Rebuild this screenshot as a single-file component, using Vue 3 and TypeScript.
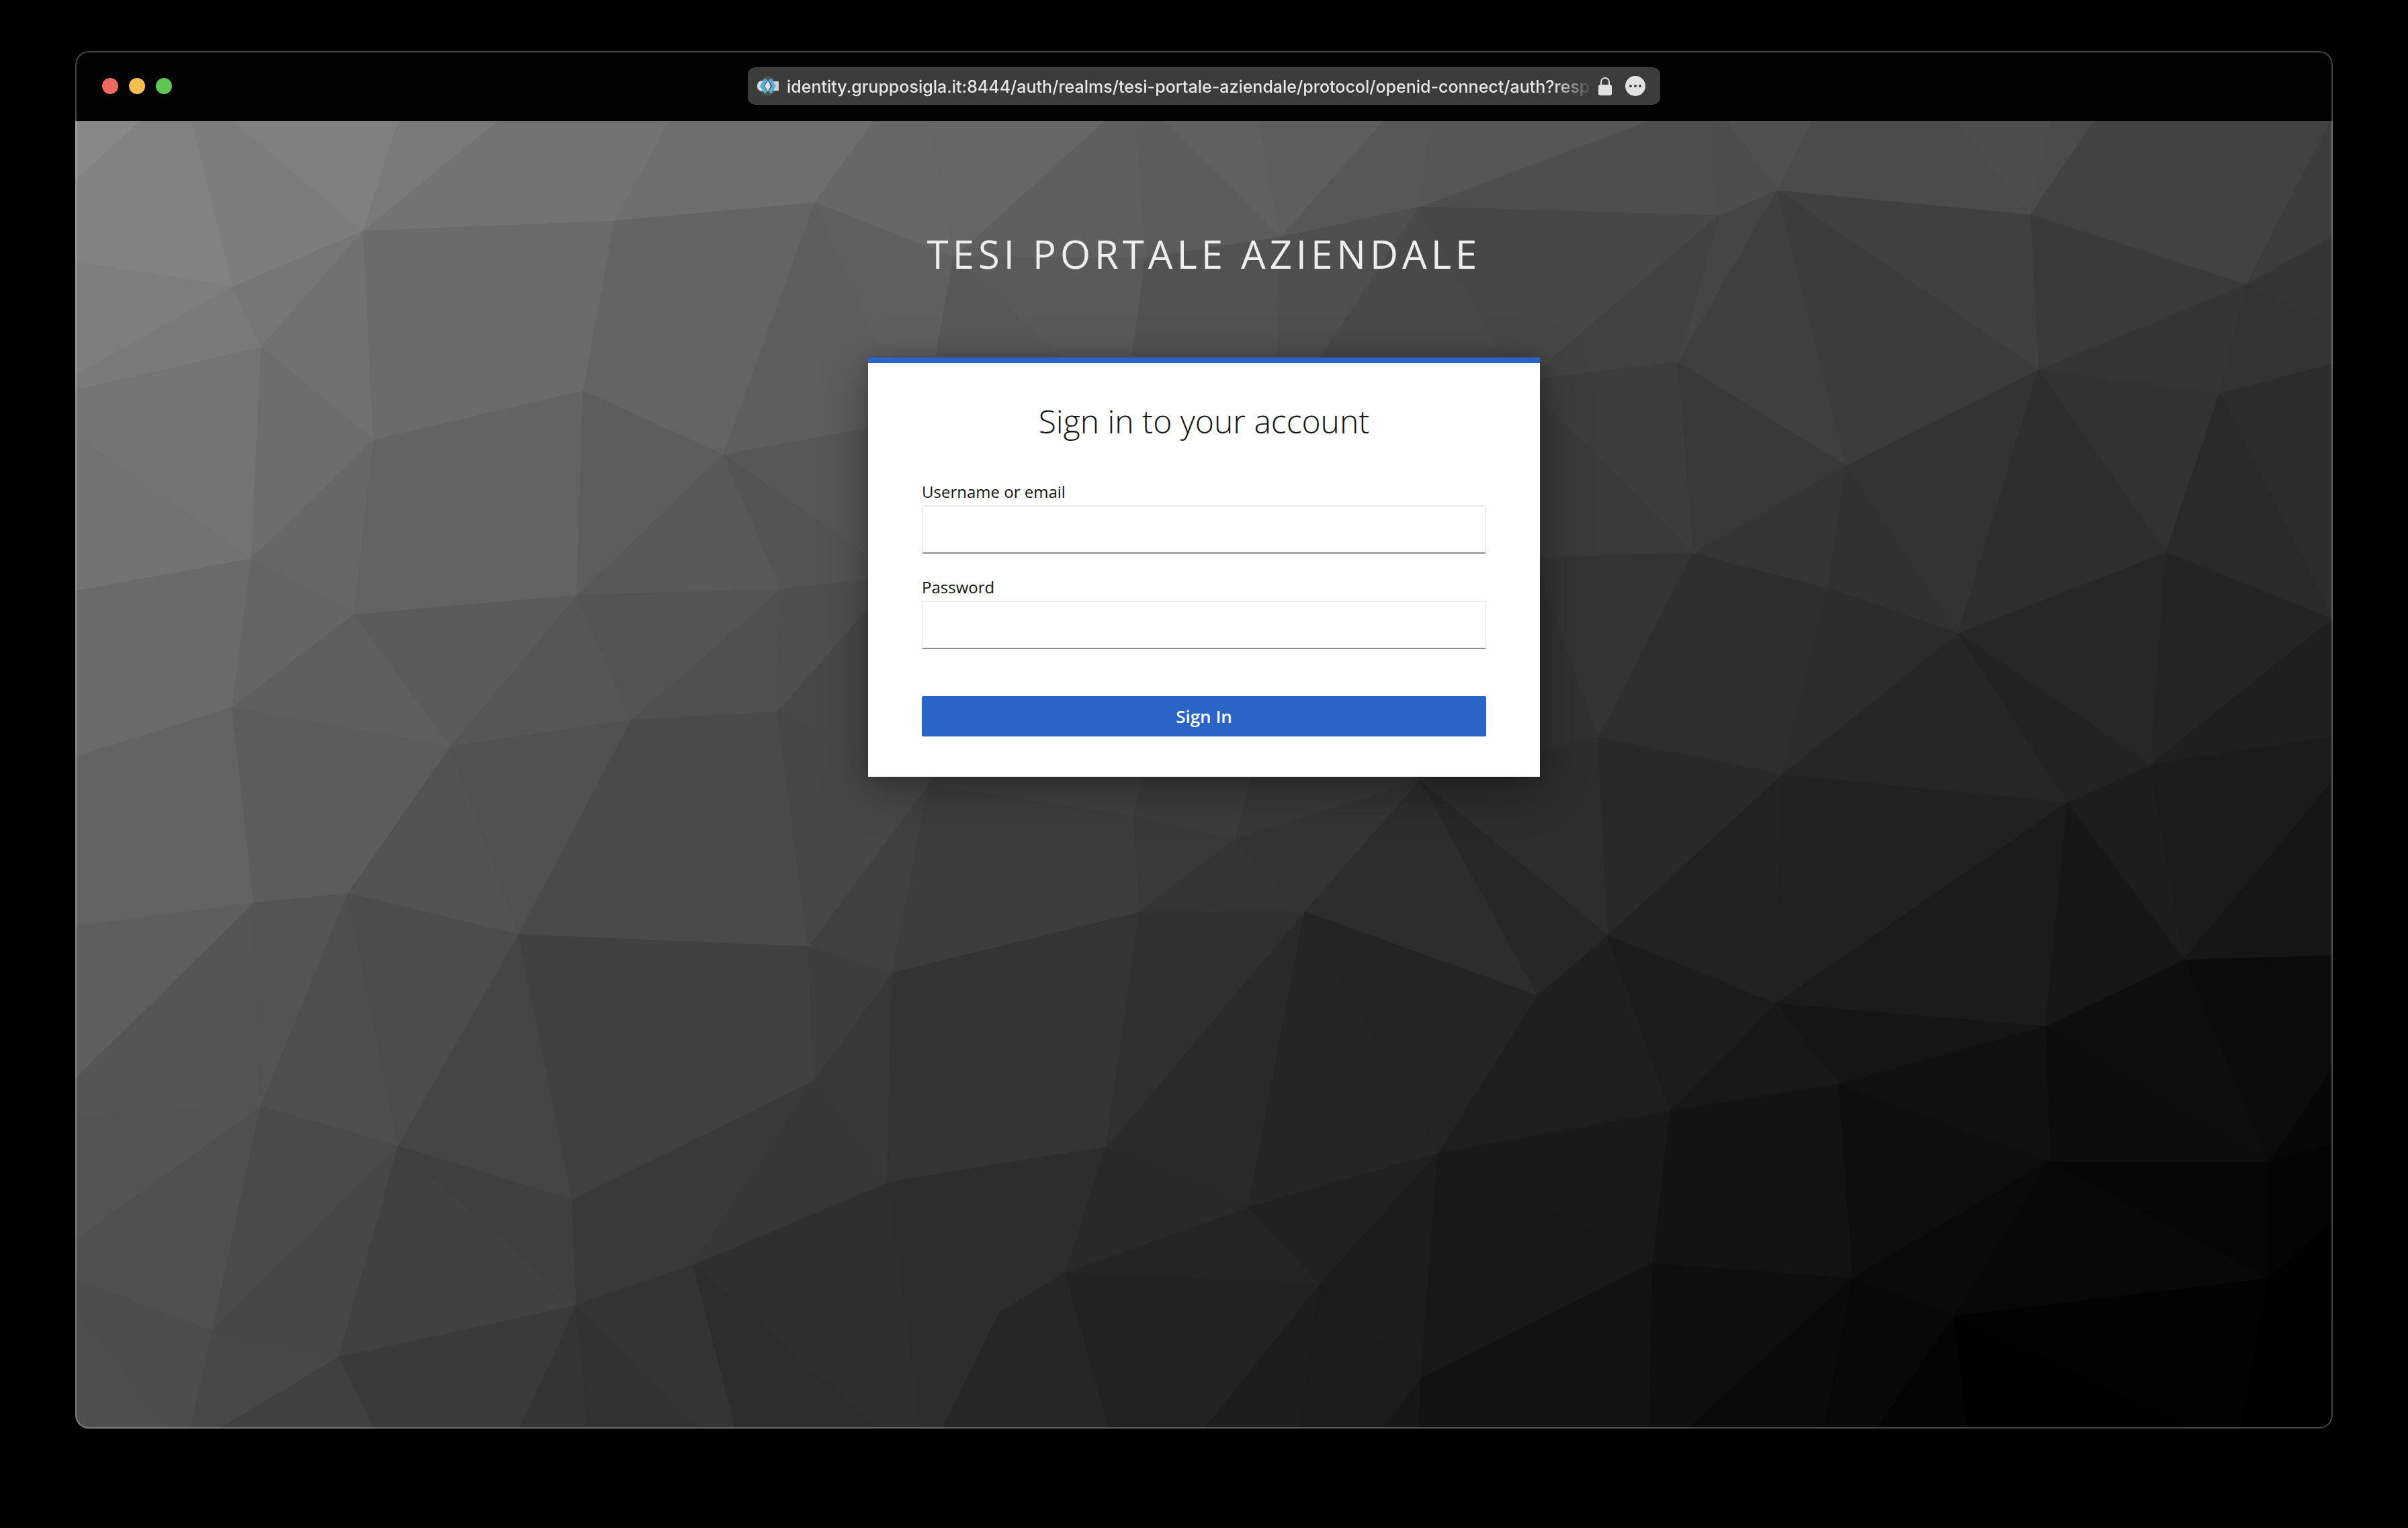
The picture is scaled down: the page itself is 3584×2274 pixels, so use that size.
<script setup lang="ts">
import { ref } from 'vue'

type Point = [number, number]

// Corner points of the faceted backdrop, by name.
const points: Record<string, Point> = {
  // top edge
  TL: [0, 0], a1: [97, 0], a2: [174, 0], a3: [233, 0], a4: [481, 0], a5: [630, 0], a6: [885, 0],
  d1: [1188, 0], d2: [1271, 0], d3: [1532, 0], d4: [1578, 0], d5: [1620, 0], d6: [1761, 0], d7: [1946, 0], d8: [2018, 0],
  e1: [2341, 0], e2: [2435, 0], e3: [2457, 0], e4: [2585, 0], e5: [2794, 0], e6: [2941, 0], e7: [3004, 0], e8: [3357, 0], TR: [3360, 0],
  // left edge
  L1: [0, 90], L2: [0, 210], L3: [0, 379], L4: [0, 401], L5: [0, 469], L6: [0, 700], L7: [0, 947], L8: [0, 1199],
  L9: [0, 1426], L10: [0, 1483], L11: [0, 1665], L12: [0, 1724], L13: [0, 1768], BL: [0, 1946],
  // right edge
  r1: [3360, 171], r2: [3360, 306], r3: [3360, 361], r4: [3360, 741], r5: [3360, 916], r6: [3360, 983], r7: [3360, 1241],
  r8: [3360, 1410], r9: [3360, 1523], r10: [3360, 1634], r11: [3360, 1790], BR: [3360, 1946],
  // bottom edge
  B1: [142, 1946], B2: [172, 1946], B3: [216, 1946], B4: [445, 1946], B5: [662, 1946], B6: [763, 1946], B7: [925, 1946], B8: [983, 1946],
  C1: [1194, 1946], C2: [1260, 1946], C3: [1291, 1946], C4: [1539, 1946], C5: [1681, 1946], C6: [1824, 1946], C7: [1946, 1946], C8: [2000, 1946],
  f1: [2343, 1946], f2: [2401, 1946], f3: [2604, 1946], f4: [2682, 1946], f5: [2816, 1946], f6: [3150, 1946], f7: [3225, 1946],
  // left part
  P1: [429, 164], P2: [235, 247], P3: [277, 337], P4: [444, 475], P5: [803, 149], P6: [756, 402], P7: [965, 497], P8: [1101, 122],
  P9: [262, 652], P10: [415, 735], P11: [747, 706], P12: [1051, 697], P13: [234, 873], P14: [559, 931], P15: [828, 892], P16: [1045, 880],
  P17: [266, 1164], P18: [406, 1150], P19: [660, 1211], P20: [1091, 1229], P21: [276, 1467], P22: [481, 1526], P23: [740, 1606],
  P24: [1099, 1429], P25: [204, 1801], P26: [392, 1840], P27: [746, 1763], P28: [920, 1702],
  // middle
  Q1: [1270, 988], Q2: [1576, 1034], Q3: [1584, 1178], Q4: [1216, 1268], Q6: [1726, 1069], Q7: [1830, 1177], Q8: [2002, 981],
  Q9: [2177, 1302], Q10: [2029, 1536], Q11: [1535, 1527], Q12: [1746, 1617], Q13: [1209, 1580], Q14: [1474, 1714], Q15: [1375, 1774],
  Q16: [1853, 1731], Q17: [2003, 1872],
  R2: [1308, 203], R3: [1593, 204], R4: [1794, 173], R5: [2001, 128],
  // points behind the sign-in card
  k1: [1224, 402], k2: [1200, 454], k3: [1200, 662], k4: [1200, 680], k5: [1200, 703], k6: [1291, 960],
  k7: [1271, 402], k8: [1520, 402], k9: [1566, 402], k10: [1787, 402], k11: [1820, 402], k12: [2155, 402],
  k13: [2160, 386], k14: [2160, 395], k15: [2160, 709], k16: [2170, 650], k17: [2140, 946],
  k18: [1593, 960], k19: [1756, 960], k20: [2001, 900],
  // right part
  S1: [2446, 141], S2: [2533, 103], S3: [2910, 139], S4: [3232, 243], S5: [2385, 359], S6: [2635, 513], S7: [2922, 370], S8: [3192, 405],
  S9: [2408, 643], S10: [2608, 695], S11: [2803, 762], S12: [3112, 642], S13: [2266, 917], S14: [2541, 972], S15: [3089, 958],
  U1: [2966, 1014], U2: [3139, 1248], U3: [2281, 1212], U4: [2532, 1313], U5: [2933, 1347], U6: [2625, 1433], U7: [2374, 1473],
  U8: [2939, 1548], U9: [3265, 1548], U10: [2348, 1700], U11: [2646, 1722], U12: [2797, 1778], U13: [3265, 1722],
}

// Each facet: its corners and its grey level (0 to 255).
const facets: [string, number][] = [
  ['TL a1 L1', 136], ['a1 a2 P2 L2 L1', 130], ['a2 a3 P1 P2', 125], ['a3 a4 P1', 128], ['a4 a5 P1', 122], ['a5 a6 P5 P1', 115],
  ['a6 d1 P8 P5', 110], ['L2 P2 L3', 126], ['L3 P2 P3 L4', 122], ['P2 P1 P3', 118], ['P1 P4 P3', 113], ['P1 P5 P6 P4', 107],
  ['P5 P8 P7 P6', 100], ['L4 P3 P9 L5', 116], ['L5 P9 L6', 115], ['P3 P4 P9', 109], ['P4 P10 P9', 103], ['P4 P6 P11 P10', 99],
  ['P6 P7 P11', 93], ['P7 P12 P11', 89], ['L6 P9 P13 L7', 106], ['P9 P10 P13', 101], ['P10 P14 P13', 95], ['P10 P11 P14', 91],
  ['P11 P15 P14', 86], ['P11 P12 P15', 84], ['P12 P16 P15', 80], ['L7 P13 P17 L8', 99], ['P13 P14 P18 P17', 92], ['P14 P19 P18', 83],
  ['P14 P15 P19', 81], ['P15 P16 P20 P19', 74], ['L8 P17 L9', 94], ['L9 P17 P21 L10', 85], ['P17 P18 P21', 84], ['P18 P22 P21', 78],
  ['P18 P19 P22', 76], ['P19 P23 P22', 69], ['P19 P24 P23', 64], ['P19 P20 P24', 65], ['L10 P21 L11', 84], ['L11 P21 P25 L12', 80],
  ['P21 P22 P25', 74], ['P22 P26 P25', 71], ['P22 P27 P26', 65], ['P22 P23 P27', 63], ['P23 P24 P28 P27', 57],
  ['L12 P25 B2 B1 L13', 77], ['L13 B1 BL', 78], ['P25 P26 B3 B2', 72], ['P26 B4 B3', 64], ['P26 P27 B5 B4', 58], ['P27 B6 B5', 52],
  ['P27 B7 B6', 50], ['P27 P28 B8 B7', 52], ['P28 C1 B8', 45], ['P28 Q13 C2 C1', 47], ['P24 Q13 P28', 55], ['P24 Q4 Q13', 56],
  ['P20 Q4 P24', 61], ['P20 Q1 Q4', 64], ['P16 Q1 P20', 71], ['Q1 Q2 Q3 Q4', 61], ['Q4 Q3 Q11 Q13', 52],
  ['Q13 Q11 Q14 Q15 C3 C2', 45], ['Q15 Q14 C4 C3', 38], ['Q14 Q16 C5 C4', 34], ['Q14 Q12 Q16', 36], ['Q14 Q11 Q12', 41],
  ['Q11 Q7 Q12', 42], ['Q3 Q7 Q11', 48], ['Q2 Q6 Q3', 57], ['Q3 Q6 Q7', 53], ['Q6 Q8 Q7', 52], ['Q7 Q8 Q9', 45], ['Q8 U3 Q9', 39],
  ['Q7 Q9 Q10', 36], ['Q7 Q10 Q12', 37], ['Q12 Q10 Q16', 32], ['Q16 C6 C5', 28], ['Q16 Q17 C7 C6', 27], ['Q16 Q10 Q17', 28],
  ['Q17 C8 C7', 23], ['Q10 U10 Q17', 24], ['Q10 U7 U10', 25], ['Q9 U7 Q10', 30], ['Q9 U3 U7', 31], ['Q17 U10 f1 C8', 18],
  ['U10 U11 f2 f1', 14], ['U11 f3 f2', 10], ['U11 U12 f4 f3', 8], ['U12 f5 f4', 4], ['U12 f6 f5', 1], ['U12 U13 f7 f6', 2],
  ['U13 r11 BR f7', 0], ['U13 r10 r11', 1], ['U7 U6 U11 U10', 19], ['U6 U8 U11', 14], ['U8 U12 U11', 10], ['U8 U13 U12', 8],
  ['U8 U9 U13', 6], ['U9 r9 r10 U13', 4], ['U9 r8 r9', 7], ['U2 r7 r8 U9', 12], ['U5 U2 U9', 14], ['U5 U9 U8', 13],
  ['U5 U8 U6', 17], ['U4 U5 U6', 21], ['U4 U6 U7', 24], ['U3 U4 U7', 28], ['S14 U4 U3', 34], ['S14 U1 U4', 33], ['U1 U5 U4', 27],
  ['U1 U2 U5', 23], ['U1 S15 U2', 29], ['S15 r5 r6 U2', 27], ['U2 r6 r7', 22], ['S13 S14 U3', 41], ['Q8 S13 U3', 45],
  ['S11 U1 S14', 38], ['S11 S15 U1', 35], ['S11 S12 S15', 39], ['S12 r4 S15', 36], ['S15 r4 r5', 31], ['S10 S11 S14', 44],
  ['S9 S10 S14 S13', 46], ['S6 S11 S10', 49], ['S6 S10 S9', 53], ['S6 S7 S11', 51], ['S7 S12 S11', 46], ['S7 S8 S12', 50],
  ['S8 r4 S12', 42], ['S8 r3 r4', 44], ['S4 r2 r3 S8', 51], ['S4 r1 r2', 53], ['S4 S8 S7', 53], ['S3 S4 S7', 58], ['S3 e7 e8 S4', 66],
  ['e8 TR r1 S4', 60], ['S2 S3 S7', 64], ['S2 S7 S6', 60], ['S2 S6 S5', 63], ['S1 S2 S5', 69], ['S5 S6 S9', 57], ['S2 e4 e5 S3', 75],
  ['S3 e5 e6', 77], ['S3 e6 e7', 75], ['S2 e3 e4', 80], ['S1 e2 e3 S2', 77], ['R5 e1 e2 S1', 78], ['R5 d8 e1', 86], ['R4 d7 d8 R5', 87],
  ['R4 d6 d7', 94], ['R4 d5 d6', 97], ['R3 d4 d5 R4', 92], ['R2 d3 d4 R3', 95], ['R2 d2 d3', 102], ['P8 d1 d2 R2', 103],
  // facets that run under the card
  ['P8 k1 k2 P7', 94], ['P8 R2 k7 k1', 96], ['R2 k8 k7', 88], ['R2 R3 k9 k8', 90], ['R3 R4 k10 k9', 82], ['R4 R5 k11 k10', 79],
  ['R5 k12 k11', 73], ['R5 S1 k13 k12', 71], ['S1 S5 k13', 66], ['S5 S9 k14 k13', 61], ['S9 k15 k14', 58], ['S9 S13 k16', 52],
  ['S13 k17 k16', 49], ['P7 k2 k3', 87], ['P7 P12 k4 k3', 84], ['P12 k4 k5 P16', 79], ['P16 k5 k6 Q1', 72], ['Q1 k6 k18 Q2', 64],
  ['Q2 k18 k19 Q6', 60], ['Q6 k19 k20 Q8', 56], ['Q8 k20 k17 S13', 49],
]

const shapes = facets.map(([corners, level]) => ({
  path: corners.split(' ').map((name) => points[name].join(',')).join(' '),
  colour: `rgb(${level}, ${level}, ${level})`,
}))

const url = 'identity.grupposigla.it:8444/auth/realms/tesi-portale-aziendale/protocol/openid-connect/auth?resp'
const username = ref('')
const password = ref('')
</script>

<template>
  <div class="desktop">
    <div class="window">
      <header class="titlebar">
        <div class="lights">
          <button class="light close" type="button" aria-label="Close"></button>
          <button class="light minimise" type="button" aria-label="Minimise"></button>
          <button class="light zoom" type="button" aria-label="Zoom"></button>
        </div>
        <div class="address">
          <svg class="favicon" viewBox="0 0 34 32" aria-hidden="true">
            <ellipse cx="18" cy="16" rx="12" ry="15" fill="#4c4e50" />
            <path d="M24 9H34V23H24Z" fill="#cfd1d2" />
            <path d="M10 8C4 8 2 12 2 16C2 20 4 24 10 24Z" fill="#d9dbdc" />
            <path d="M18 8L22 16L18 24L13 16Z" fill="#dfe3e5" />
            <path d="M15 6L9 16L15 26" fill="none" stroke="#4fb4dc" stroke-width="5" />
            <path d="M21 6L27 16L21 26" fill="none" stroke="#4fb4dc" stroke-width="5" />
          </svg>
          <span class="url">{{ url }}</span>
          <svg class="lock" viewBox="0 0 20 28" aria-hidden="true">
            <path d="M4 13V8a6 6 0 0 1 12 0V13" fill="none" stroke="#e2e2e2" stroke-width="2" />
            <rect x="0" y="12" width="20" height="16" rx="3" fill="#e2e2e2" />
          </svg>
          <button class="more" type="button" aria-label="Page menu">
            <svg viewBox="0 0 30 30" aria-hidden="true">
              <circle cx="15" cy="15" r="15" fill="#e2e2e2" />
              <circle cx="8" cy="15" r="2" fill="#3c3c3c" />
              <circle cx="15" cy="15" r="2" fill="#3c3c3c" />
              <circle cx="22" cy="15" r="2" fill="#3c3c3c" />
            </svg>
          </button>
        </div>
      </header>

      <main class="page">
        <svg class="backdrop" viewBox="0 0 3360 1946" preserveAspectRatio="xMidYMid slice" aria-hidden="true">
          <polygon
            v-for="(shape, index) in shapes"
            :key="index"
            :points="shape.path"
            :fill="shape.colour"
            :stroke="shape.colour"
          />
        </svg>
        <h1 class="realm">Tesi Portale Aziendale</h1>
        <section class="card">
          <h2 class="heading">Sign in to your account</h2>
          <form @submit.prevent>
            <div class="field">
              <label for="username">Username or email</label>
              <input id="username" v-model="username" type="text" autocomplete="off" />
            </div>
            <div class="field">
              <label for="password">Password</label>
              <input id="password" v-model="password" type="password" autocomplete="off" />
            </div>
            <button class="submit" type="submit">Sign In</button>
          </form>
        </section>
      </main>
    </div>
  </div>
</template>

<style>
body {
  background: #000;
}
</style>

<style scoped>
* {
  box-sizing: border-box;
}

.desktop {
  display: flex;
  min-height: 100vh;
  padding: 76px 112px 148px;
  background: #000;
  font-family: 'Open Sans', 'Noto Sans', sans-serif;
}

.window {
  position: relative;
  display: flex;
  flex: 1;
  flex-direction: column;
  min-width: 0;
  overflow: hidden;
  border-radius: 20px;
  background: #020202;
}

.window::after {
  position: absolute;
  inset: 0;
  border: 2px solid rgba(255, 255, 255, 0.28);
  border-radius: 20px;
  content: '';
  pointer-events: none;
}

.titlebar {
  display: grid;
  grid-template-columns: 1fr minmax(0, 1358px) 1fr;
  align-items: center;
  height: 104px;
  padding: 0 40px;
}

.lights {
  display: flex;
  gap: 16px;
}

.light {
  width: 24px;
  height: 24px;
  padding: 0;
  border: 0;
  border-radius: 50%;
}

.close {
  background: #ec6a5e;
}

.minimise {
  background: #f4bf4f;
}

.zoom {
  background: #61c554;
}

.address {
  display: flex;
  align-items: center;
  height: 56px;
  padding: 0 22px 0 12px;
  border-radius: 12px;
  background: #3c3c3c;
}

.favicon {
  flex: none;
  width: 34px;
  height: 32px;
}

.url {
  flex: 1;
  min-width: 0;
  margin: 0 8px 0 12px;
  padding-top: 2px;
  color: #e6e6e6;
  font-family: Inter, 'Liberation Sans', sans-serif;
  font-size: 25px;
  font-weight: 500;
  line-height: 36px;
  white-space: nowrap;
  mask-image: linear-gradient(to right, #000 calc(100% - 56px), transparent);
}

.lock {
  flex: none;
  width: 20px;
  height: 28px;
  margin-right: 20px;
}

.more {
  flex: none;
  width: 30px;
  height: 30px;
  padding: 0;
  border: 0;
  border-radius: 50%;
  background: none;
}

.more svg {
  display: block;
}

.page {
  position: relative;
  display: flex;
  flex: 1;
  flex-direction: column;
  align-items: center;
  padding: 158px 40px 80px;
  isolation: isolate;
}

.backdrop {
  position: absolute;
  inset: 0;
  z-index: -1;
  width: 100%;
  height: 100%;
}

.realm {
  margin: 0 0 114px;
  color: #ededed;
  font-size: 58px;
  font-weight: 400;
  letter-spacing: 6px;
  line-height: 80px;
  text-transform: uppercase;
}

.card {
  width: 100%;
  max-width: 1000px;
  padding: 56px 80px 60px;
  border-top: 8px solid #2a64c6;
  background: #fff;
  box-shadow: 0 16px 64px rgba(3, 3, 3, 0.34), 0 0 16px rgba(3, 3, 3, 0.14);
}

.heading {
  margin: 0 0 56px;
  color: #151515;
  font-size: 48px;
  font-weight: 300;
  line-height: 62px;
  text-align: center;
}

.field {
  margin-bottom: 32px;
}

label {
  display: block;
  margin-bottom: 2px;
  color: #151515;
  font-size: 24px;
  line-height: 36px;
}

input {
  display: block;
  width: 100%;
  height: 72px;
  padding: 0 16px;
  border: 2px solid #ededed;
  border-bottom-color: #8b8d8f;
  background: #fff;
  font: inherit;
  font-size: 28px;
}

.submit {
  display: block;
  width: 100%;
  height: 60px;
  margin-top: 70px;
  padding: 0;
  border: 0;
  border-radius: 2px;
  background: #2a64c6;
  color: #fff;
  font-family: 'Open Sans', 'Noto Sans', sans-serif;
  font-size: 26px;
  font-weight: 600;
  line-height: 36px;
}
</style>
